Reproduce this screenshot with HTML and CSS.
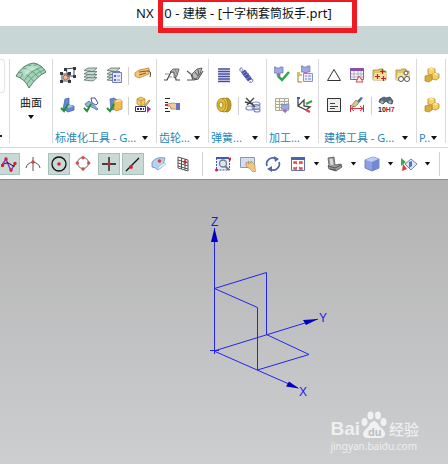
FILE: index.html
```html
<!DOCTYPE html>
<html lang="zh-CN">
<head>
<meta charset="utf-8">
<title>NX 10 - 建模</title>
<link rel="stylesheet" href="styles.css">
</head>
<body>
<svg class="defs" aria-hidden="true">
  <symbol id="check" viewBox="0 0 16 16"><path d="M1 11l3 3 4-7" fill="none" stroke="#27903a" stroke-width="2"/></symbol>
  <symbol id="stack" viewBox="0 0 16 16"><g fill="#c6d9d0" stroke="#5b7068" stroke-width=".8"><path d="M1 13l4-2.500h9l-4 3.500z"/><path d="M1 10l4-2.500h9l-4 3.500z"/><path d="M1 7l4-2.500h9l-4 3.500z"/><path d="M1 3.500l4-2.500h9l-4 3.500z"/></g></symbol>
  <symbol id="cubes" viewBox="0 0 16 16"><g stroke="#b98c24" stroke-width=".8"><path d="M4 2l3-1 4 1v4l-3 2-4-1z" fill="#f7d468"/><path d="M8 7l3-1 4 1v4l-3 2-4-1z" fill="#f8cf5c"/><path d="M1 9l3-1 4 1v4l-3 2-4-1z" fill="#d5ad3b"/></g><path d="M4 2l4 1 3-1-4-1zM8 7l4 1 3-1-4-1z" fill="#fff0b5"/></symbol>
  <symbol id="folder" viewBox="0 0 16 16"><path d="M1 3h5l1-1h4v2h3v9H1z" fill="#e2c565" stroke="#a58a3b" stroke-width=".8"/><path d="M3 6h12l-2 7H1z" fill="#f5dfa0"/></symbol>
  <symbol id="clamp" viewBox="0 0 16 16"><path d="M0 1h2v1h4V1h3v6H6v3H3V7H0z" fill="#9cabdc" stroke="#6877b5" stroke-width=".7"/><path d="M3 7h3v2l-1 3-2-3z" fill="#c25cc8"/></symbol>
</svg>

<header class="title">
  <h1 class="title-text">NX 10 - <span class="cjk">建模</span> - [<span class="cjk">十字柄套筒扳手</span>.prt]</h1>
  <span class="highlight"></span>
</header>
<div class="tabs"></div>

<main class="app">
<section class="ribbon" aria-label="功能区">
  <div class="edge"><span class="edge-box"></span><button class="caret" aria-label="更多"></button></div>
  <div class="surface">
    <button class="big">
      <svg class="big-icon" viewBox="0 0 32 27"><path d="M1 14Q8 2 19 1Q27 3 31 10Q22 14 14 26Q10 17 1 14z" fill="#a5d3b8" stroke="#4c8366"/><path d="M4 10Q14 12 19 20M8 6Q18 8 23 15M13 3Q22 5 27 12M5 16Q12 5 23 2M9 19Q16 8 27 5M12 22Q18 12 29 8" fill="none" stroke="#5b9677" stroke-width=".8"/><path d="M7 11Q13 4 18 3L23 6Q15 8 10 14z" fill="#e1f4e9" opacity=".6"/></svg>
      <span>曲面</span>
      <i class="tri"></i>
    </button>
  </div>

  <div class="group">
    <div class="row">
      <button class="tool" aria-label="部件族"><svg viewBox="0 0 16 16"><path d="M6 2l8-1v8H8zM2 7h7v7H2z" fill="none" stroke="#444853"/><g fill="#353944"><path d="M4 1h3v3H4zM13 0h3v3h-3zM13 8h3v3h-3zM0 5h3v3H0zM8 5h3v3H8zM0 13h3v3H0zM8 13h3v3H8z"/></g><circle cx="5.500" cy="10.500" r="2.500" fill="#f4b291" stroke="#df4d3b"/></svg></button>
      <button class="tool" aria-label="图层"><svg viewBox="0 0 16 16"><use href="#stack"/></svg></button>
      <button class="tool" aria-label="图层设置"><svg viewBox="0 0 16 16"><use href="#stack"/><path d="M6.500 5.500h9v10h-9z" fill="#e6e9ff" stroke="#727bbf"/><path d="M8 8h2v2H8zM8 12h2v2H8z" fill="#5961b8"/><path d="M11 9h3M11 13h3" stroke="#7780bc"/></svg></button>
      <i class="rule"></i>
      <button class="tool" aria-label="属性"><svg viewBox="0 0 16 16"><path d="M0 6l4-3 10-2v6L4 11 0 9z" fill="#f7c679" stroke="#bd7d31" stroke-width=".8"/><path d="M4 5l8-1M4 8l7-2" stroke="#7f5937"/><path d="M12 4q5-1 3 6" fill="none" stroke="#574649"/></svg></button>
    </div>
    <div class="row">
      <button class="tool" aria-label="检查模型"><svg viewBox="0 0 16 16"><path d="M5 2l4-1v7l5 1v4l-6 2-5-3z" fill="#6389d5" stroke="#3b5daa" stroke-width=".7"/><path d="M5 9l4-1 5 1-5 2z" fill="#a9c2f0"/><use href="#check"/></svg></button>
      <button class="tool" aria-label="检查工具"><svg viewBox="0 0 16 16"><path d="M8 1h4l3 5-2 2-4-2z" fill="#fff" stroke="#4752bb"/><path d="M2 7l4-3 9 8-1 1-7-4-3 1z" fill="#8ebad5" stroke="#4c6c91" stroke-width=".8"/><use href="#check"/></svg></button>
      <button class="tool" aria-label="检查装配"><svg viewBox="0 0 16 16"><path d="M4 2l4-1 3 2v9l-6 1z" fill="#638bd6" stroke="#3f5d9e" stroke-width=".7"/><path d="M8 4l6-2 2 2v8l-6 2-2-2z" fill="#efbd4f" stroke="#b18125" stroke-width=".7"/><path d="M8 4l6-2 2 2-5 1z" fill="#ffe29a"/><use href="#check"/></svg></button>
      <i class="rule"></i>
      <button class="tool" aria-label="零件编辑"><svg viewBox="0 0 16 16"><path d="M2 2l4-2 4 2v5L6 9 2 7z" fill="#f2cc65" stroke="#b88a29" stroke-width=".8"/><path d="M2 2l4 2 4-2M6 4v5" fill="none" stroke="#b88a29" stroke-width=".8"/><path d="M9 9l5-6 1 1-5 6z" fill="#dbc06a" stroke="#826632" stroke-width=".6"/><path d="M.5 9.500h10v5H.5z" fill="#fff" stroke="#3c3472"/><path d="M2 12h7" stroke="#382c68" stroke-width="2" stroke-dasharray="2 1"/><path d="M12 9l4 3-4 4z" fill="#a32ab2"/></svg></button>
    </div>
    <div class="label"><span>标准化工具 - G...</span><i class="tri"></i></div>
  </div>

  <div class="group">
    <div class="row">
      <button class="tool" aria-label="柱齿轮"><svg viewBox="0 0 16 16"><path d="M0 13h3l4-8h4l1 8h4" fill="none" stroke="#444" stroke-width="1.200"/><path d="M6 5l3-3h6l-2 7-3 2V5z" fill="#b5b8b8" stroke="#525656" stroke-width=".8"/><path d="M8 4l4 5M11 2l2 5M1 7h4M4 10h4" stroke="#777" stroke-width=".8"/></svg></button>
      <button class="tool" aria-label="锥齿轮"><svg viewBox="0 0 16 16"><path d="M0 4l4 3 2 6 5-1 5-8" fill="none" stroke="#555" stroke-width="1.200"/><path d="M5 7l5-5 5-1-2 6-4 5-3-1z" fill="#b7b9b9" stroke="#444" stroke-width=".8"/><path d="M8 5l3 4M11 3l1 5M0 13h5" stroke="#555"/></svg></button>
    </div>
    <div class="row">
      <button class="tool" aria-label="齿轮出图"><svg viewBox="0 0 16 16"><path d="M1 1.500h5M1 5.500h3M1 11.500h3M1 14.500h5" stroke="#222"/><path d="M3 7l7-1 3 1v5H7L6 9H3z" fill="#f1ca9c" stroke="#9c7458" stroke-width=".7"/><path d="M12 6h4v7h-4z" fill="#696fc3"/><path d="M1 7h3v2H1z" fill="#e32b31"/></svg></button>
    </div>
    <div class="label"><span>齿轮...</span><i class="tri"></i></div>
  </div>

  <div class="group">
    <div class="row">
      <button class="tool" aria-label="压缩弹簧"><svg viewBox="0 0 16 16"><path d="M3 2h10v12H3z" fill="#dfe1fa"/><path d="M2 2h12M2 4.500h12M2 7h12M2 9.500h12M2 12h12M2 14.500h12" stroke="#4b509c" stroke-width="1.300"/></svg></button>
      <button class="tool" aria-label="拉伸弹簧"><svg viewBox="0 0 16 16"><path d="M4 3Q2-1 1 2t3 2M11 12q4 0 3 2t-4 1" fill="none" stroke="#7474a0"/><path d="M4 4l7 9" stroke="#4a50a6" stroke-width="5"/><path d="M3 7l5-3M5 9l5-3M7 12l5-3" stroke="#8f98dc" stroke-width=".8"/></svg></button>
    </div>
    <div class="row">
      <button class="tool" aria-label="碟形弹簧"><svg viewBox="0 0 16 16"><g stroke="#957112" stroke-width=".8"><ellipse cx="11" cy="8" rx="4" ry="7" fill="#c39d27"/><ellipse cx="8" cy="8" rx="4" ry="7" fill="#eed15c"/><ellipse cx="5.500" cy="8" rx="4.500" ry="6.500" fill="#e2bd39"/><ellipse cx="5" cy="8" rx="2" ry="3" fill="#fff3b7"/></g></svg></button>
      <i class="rule"></i>
      <button class="tool" aria-label="删除弹簧"><svg viewBox="0 0 16 16"><g fill="none" stroke="#7d8bbd" stroke-width="1.200"><ellipse cx="11" cy="7" rx="4" ry="2"/><ellipse cx="11" cy="10" rx="4" ry="2.500"/><ellipse cx="12" cy="13" rx="3" ry="2"/><ellipse cx="5" cy="11" rx="4" ry="2"/></g><path d="M1 1l9 9M9 1L2 8M0 5l8 2" stroke="#444" stroke-width="1.400"/></svg></button>
    </div>
    <div class="label"><span>弹簧...</span><i class="tri"></i></div>
  </div>

  <div class="group">
    <div class="row">
      <button class="tool" aria-label="加工准备"><svg viewBox="0 0 16 16"><use href="#clamp" width="16" height="16" y="-1"/><path d="M4 9l4 4 7-8" fill="none" stroke="#29a947" stroke-width="2.500"/></svg></button>
      <button class="tool" aria-label="加工列表"><svg viewBox="0 0 16 16"><path d="M1 6v9h4M1 8h4" fill="none" stroke="#9d7b20"/><path d="M0 5h3v3H0z" fill="#dec04e"/><use href="#clamp" width="16" height="16" x="4" y="-2"/><path d="M6.500 6.500h9v8h-9z" fill="#e9ebfc" stroke="#8a93c5"/><path d="M8 9h2M11 9h3M8 12h2M11 12h3" stroke="#7b82b7"/></svg></button>
    </div>
    <div class="row">
      <button class="tool" aria-label="工件网格"><svg viewBox="0 0 16 16"><path d="M1.500 1.500h13v12h-13zM2 4.500h12M2 7.500h12M2 10.500h12M5.500 2v11M10.500 2v11" fill="#faf8e4" stroke="#a9a99c"/><use href="#clamp" width="14" height="14" x="7" y="6"/></svg></button>
      <button class="tool" aria-label="加工坐标"><svg viewBox="0 0 16 16"><path d="M1 1v8l8 4M1 9l6-6v6l6 1-4 3" fill="none" stroke="#444" stroke-width="1.300"/><path d="M0 1h3" stroke="#355bdb" stroke-width="2"/><path d="M9 7l6-3" stroke="#3ca04a" stroke-width="2"/><path d="M9 13l4 2" stroke="#d6444f" stroke-width="2"/></svg></button>
    </div>
    <div class="label"><span>加工...</span><i class="tri"></i></div>
  </div>

  <div class="group">
    <div class="row">
      <button class="tool" aria-label="基准"><svg viewBox="0 0 16 16"><path d="M8 2.500l6.500 11h-13z" fill="none" stroke="#333"/></svg></button>
      <button class="tool" aria-label="表格"><svg viewBox="0 0 16 16"><path d="M1.500 1.500h13v11h-13z" fill="#f5f4ff" stroke="#77728f"/><path d="M1 1h14v3H1z" fill="#8952a4"/><path d="M2 7h12M2 10h12M5 4v8M9 4v8M12 4v8" stroke="#b1aec8"/><path d="M10 9l4 6H7z" fill="#fff" stroke="#d24146"/></svg></button>
      <button class="tool" aria-label="点集文件"><svg viewBox="0 0 16 16"><use href="#folder"/><path d="M10.500 2v5M8 4.500h5M5.500 7v5M3 9.500h5M11.500 9v5M9 11.500h5" stroke="#ba2525" stroke-width="1.200"/></svg></button>
      <button class="tool" aria-label="孔文件"><svg viewBox="0 0 16 16"><use href="#folder"/><g fill="#fff" stroke="#555"><circle cx="11" cy="6" r="2"/><circle cx="6" cy="12" r="2.500"/><circle cx="12" cy="12" r="2.500"/></g></svg></button>
    </div>
    <div class="row">
      <button class="tool" aria-label="注释"><svg viewBox="0 0 16 16"><path d="M1.500 1.500h13v13h-13z" fill="#eee" stroke="#333"/><path d="M4 6.500h5M4 9.500h8M4 11.500h5" stroke="#444"/></svg></button>
      <button class="tool" aria-label="尺寸清理"><svg viewBox="0 0 16 16"><path d="M12 0l2 1-4 5-2-2z" fill="#4f6fab"/><path d="M7 3l3 3-4 4-4-1z" fill="#d5c586" stroke="#858464" stroke-width=".7"/><path d="M1.500 8v7M14.500 8v7M2 11.500h12M5 9l-3 2.500 3 2.500M11 9l3 2.500-3 2.500" fill="none" stroke="#ce3342"/></svg></button>
      <i class="rule"></i>
      <button class="tool" aria-label="公差查询"><svg viewBox="0 0 16 16"><path d="M2 2l4-2 2 1 4-1 3 4-1 3-4-1-2-2-3 3-4-2z" fill="#596b7f" stroke="#333e4c" stroke-width=".7"/><circle cx="4" cy="5" r="1.500" fill="#a3b4bf"/><circle cx="12" cy="5" r="1.500" fill="#a3b4bf"/><text x="0" y="15" class="fit-text">10<tspan class="fit-code">H7</tspan></text></svg></button>
    </div>
    <div class="label wide"><span>建模工具 - G...</span><i class="tri"></i></div>
  </div>

  <div class="group">
    <div class="row"><button class="tool" aria-label="部件"><svg viewBox="0 0 16 16"><use href="#cubes"/></svg></button></div>
    <div class="row"><button class="tool" aria-label="部件组"><svg viewBox="0 0 16 16"><use href="#cubes"/></svg></button></div>
    <div class="label"><span>P..</span><i class="tri"></i></div>
  </div>
  <div class="group last"></div>
</section>

<nav class="toolbar" aria-label="选择工具条">
  <div class="pair">
    <button class="snap on" aria-label="控制点"><svg viewBox="0 0 16 16"><path d="M1 9l4-6 5 12 4-8" fill="none" stroke="#9333cc" stroke-width="1.500"/><path d="M1 10q4-5 8-2t5 2" fill="none" stroke="#111"/><g fill="#d8202b"><circle cx="1.500" cy="9.500" r="1.700"/><circle cx="5" cy="3" r="1.700"/><circle cx="10" cy="14" r="1.700"/><circle cx="14" cy="7.500" r="1.700"/></g></svg></button>
    <button class="snap" aria-label="交点"><svg viewBox="0 0 16 16"><path d="M8 1v14M1 12q1-5 7-6 6 1 7 6" fill="none" stroke="#555"/><circle cx="8" cy="6" r="1.700" fill="#dc3d40"/></svg></button>
  </div>
  <div class="pair">
    <button class="snap on" aria-label="圆心"><svg viewBox="0 0 16 16"><circle cx="8" cy="8" r="7" fill="none" stroke="#111" stroke-width="1.300"/><circle cx="8" cy="8" r="1.800" fill="#d8202b"/></svg></button>
    <button class="snap" aria-label="象限点"><svg viewBox="0 0 16 16"><circle cx="8" cy="7" r="5.500" fill="none" stroke="#666"/><g fill="#dc4b4b"><circle cx="8" cy="1.700" r="1.700"/><circle cx="8" cy="13" r="1.700"/><circle cx="2.300" cy="7" r="1.700"/><circle cx="13.700" cy="7" r="1.700"/></g></svg></button>
  </div>
  <div class="pair">
    <button class="snap on" aria-label="现有点"><svg viewBox="0 0 16 16"><path d="M8 1v14M1 8h14" stroke="#111" stroke-width="1.300"/><circle cx="8" cy="8" r="1.700" fill="#d8202b"/></svg></button>
    <button class="snap on" aria-label="曲线上的点"><svg viewBox="0 0 16 16"><path d="M1 15L14 2" stroke="#111" stroke-width="1.300"/><circle cx="6" cy="11" r="1.900" fill="#d8202b"/></svg></button>
  </div>
  <div class="pair">
    <button class="snap" aria-label="面上的点"><svg viewBox="0 0 16 16"><path d="M1 6q5-6 13-4-1 3-2 8l-5 4q-3-3-6-3z" fill="#b5d1ee" stroke="#668dba" stroke-width=".8"/><path d="M7 14q0-5 7-7l1 2-3 1z" fill="#e9f4fc" stroke="#9eb2c4" stroke-width=".5"/><circle cx="8.500" cy="5" r="1.800" fill="#d64249"/></svg></button>
    <button class="snap" aria-label="网格点"><svg viewBox="0 0 16 16"><path d="M3 1l10 3v11L3 12zM6.500 2v11M10 3v11M3 4l10 3M3 7l10 3M3 10l10 3" fill="none" stroke="#444" stroke-width=".9"/><circle cx="10" cy="6" r="1.700" fill="#d8202b"/></svg></button>
  </div>
  <i class="bar"></i>
  <div class="views">
    <button class="snap" aria-label="缩放窗口"><svg viewBox="0 0 16 16"><path d="M1.500 2v12h13V2" fill="#e8edff" stroke="#3f55bd" stroke-dasharray="2 1"/><path d="M1 1h13v2H1z" fill="#405baf"/><circle cx="8" cy="7.500" r="3.500" fill="#d7eaf3" stroke="#6f7e84" stroke-width="1.300"/><path d="M10 10l4 4" stroke="#777" stroke-width="2"/><circle cx="15" cy="3" r="1.500" fill="#d8202b"/><circle cx="1.500" cy="14" r="1.500" fill="#d8202b"/></svg></button>
    <button class="snap" aria-label="平移"><svg viewBox="0 0 16 16"><path d="M.5 1.500h14v10H.5z" fill="#d6deec" stroke="#8799b8"/><path d="M6 6l3 2-1-3 3 2V5l2 2 2 2v4l2 2-4 1-3-3-4-3z" fill="#edc983" stroke="#a98045" stroke-width=".6"/></svg></button>
    <button class="snap" aria-label="旋转"><svg viewBox="0 0 16 16"><path d="M2 10A6 6 0 0 1 11 3M14 6A6 6 0 0 1 5 13" fill="none" stroke="#5368a1" stroke-width="1.700"/><path d="M9 0l5 3-4 3zM7 10l-5 3 5 3z" fill="#5368a1"/></svg></button>
    <button class="snap" aria-label="适合窗口"><svg viewBox="0 0 16 16"><path d="M1.500 1.500h13v13h-13z" fill="#fff" stroke="#5871b8"/><path d="M1 1h14v3H1z" fill="#4765ac"/><path d="M4 6l3 2M12 6L9 8M4 13l3-2M12 13l-3-2M4 8V6h3M12 8V6H9M4 11v2h3M12 11v2H9" fill="none" stroke="#e64c3c" stroke-width="1.300"/></svg></button>
    <button class="drop" aria-label="视图选项"><i class="tri"></i></button>
    <button class="snap" aria-label="定向视图"><svg viewBox="0 0 16 16"><path d="M1 2l6-1 1 8 6-1 1 3-6 4-7-2-1-3 1-1z" fill="#999" stroke="#555" stroke-width=".8"/><path d="M2.500 3l3-.5 1 6-3 1z" fill="#d6d6d6"/><path d="M1 10l7 2 6-3M3 13l6 1" fill="none" stroke="#555"/></svg></button>
    <button class="drop" aria-label="定向选项"><i class="tri"></i></button>
    <button class="snap" aria-label="着色"><svg viewBox="0 0 16 16"><path d="M1 4l8-3 6 2v9l-7 3-7-3z" fill="#8ba0e5" stroke="#5c71bb" stroke-width=".8"/><path d="M1 4l8-3 6 2-7 3z" fill="#bdcbf7"/><path d="M8 6v9l7-3V3z" fill="#7188d5"/></svg></button>
    <button class="drop" aria-label="着色选项"><i class="tri"></i></button>
    <button class="snap" aria-label="显示和隐藏"><svg viewBox="0 0 16 16"><path d="M0 2l5 4-5 4z" fill="#3ea848"/><path d="M1 15l1-7 4 5z" fill="#d93b3b"/><path d="M4 8l6-5 6 5-6 6z" fill="#dce5f4" stroke="#7787a8"/><path d="M8 6l3-1v5l-3 2z" fill="#5874b3"/></svg></button>
    <button class="drop" aria-label="显示选项"><i class="tri"></i></button>
  </div>
  <i class="bar end"></i>
</nav>

<section class="canvas" aria-label="图形窗口">
  <svg class="axes" viewBox="0 0 448 284">
    <g fill="none" stroke="#2424ee">
      <path d="M214.500 48v126M210 170.500h9M214 171L318 139M214 171L298 208"/>
      <path d="M214.500 108.500L266.500 92.500V154.500L309 174.500L257.500 190V127.500z"/>
    </g>
    <g fill="#0000c4"><path d="M214.500 48l3.500 14h-7z"/><path d="M318 139l-12 6-3-5z"/><path d="M299 208.500l-13-2 3-5z"/></g>
    <g class="axis-name"><text x="211" y="46">Z</text><text x="319" y="142">Y</text><text x="299" y="216">X</text></g>
  </svg>
  <div class="brand">
    <div class="brand-top">
      <span class="bai">Bai</span>
      <span class="paw"><svg viewBox="0 0 26 28"><g fill="#f0f1f2"><ellipse cx="3.500" cy="11" rx="3" ry="4"/><ellipse cx="9.500" cy="4.500" rx="3" ry="4"/><ellipse cx="17" cy="4.500" rx="3" ry="4"/><ellipse cx="22.500" cy="11" rx="3" ry="4"/><path d="M13 10q3 0 6 6 6 4 5 8-1 3-5 3h-12q-5 0-5-4 0-3 5-7 3-6 6-6z"/></g><text x="7" y="25" class="du">du</text></svg></span>
      <span class="jy">经验</span>
    </div>
    <div class="site">jingyan.baidu.com</div>
  </div>
</section>
</main>
</body>
</html>
```
FILE: styles.css
```css
* { box-sizing: border-box; }
html, body { height: 100%; }
body {
  margin: 0;
  display: flex;
  flex-direction: column;
  background: #fff;
  color: #111;
  font-family: "Noto Sans", "Noto Sans CJK SC", sans-serif;
  font-size: 11px;
  overflow: hidden;
}
button { padding: 0; border: 0; background: none; font: inherit; color: inherit; }
svg { display: block; }
.defs { position: absolute; width: 0; height: 0; }

.title { position: relative; flex: none; height: 26px; padding-left: 136px; }
.title-text { margin: 0; font-size: 13px; font-weight: 400; line-height: 26px; white-space: nowrap; }
.cjk { font-size: 12px; }
.highlight {
  position: absolute;
  z-index: 1;
  left: 158px;
  top: -3px;
  width: 199px;
  height: 36px;
  border: 5px solid #ed1c24;
}
.tabs { flex: none; height: 28px; background: #c8d7d5; }
.app { flex: 1; min-height: 0; display: flex; flex-direction: column; }

.ribbon {
  flex: none;
  display: flex;
  height: 94px;
  padding-top: 5px;
  padding-bottom: 4px;
  border-bottom: 1px solid #dadada;
}
.edge { width: 9px; display: flex; flex-direction: column; justify-content: space-between; overflow: hidden; }
.edge-box { width: 5px; height: 34px; border: 1px solid #e4e4e4; border-left: 0; border-radius: 0 4px 4px 0; }
.caret { width: 2px; height: 2px; margin-bottom: 6px; background: #222; }
.surface { width: 43px; border-left: 1px solid #dadada; }
.big { width: 100%; display: flex; flex-direction: column; align-items: center; padding-top: 3px; }
.big-icon { width: 32px; height: 27px; margin-bottom: 6px; }
.big span { line-height: 16px; }
.big .tri { margin-top: 4px; }
.tri { flex: none; width: 6px; height: 4px; background: #111; clip-path: polygon(0 0, 100% 0, 50% 100%); }

.group {
  display: flex;
  flex-direction: column;
  gap: 14px;
  padding: 8px 5px 0 7px;
  border-left: 1px solid #dadada;
}
.row { display: flex; gap: 7px; height: 16px; }
.tool { width: 16px; height: 16px; }
.tool svg { width: 16px; height: 16px; overflow: visible; }
.rule { width: 1px; height: 18px; margin: 0 -1px; background: #cfcfcf; }
.label {
  width: 0;
  min-width: 100%;
  height: 14px;
  margin-top: 4px;
  display: flex;
  align-items: center;
  justify-content: space-between;
  line-height: 14px;
  white-space: nowrap;
  color: #2486b9;
}
.label span { flex: 1; min-width: 0; margin-left: -5px; }
.label .tri { margin-right: 3px; }
.label.wide span { margin-left: -2px; }
.last { padding: 0; }
.fit-text { font: bold 7px "Liberation Sans", sans-serif; fill: #222; }
.fit-code { fill: #c22330; }

.toolbar { flex: none; display: flex; align-items: center; height: 32px; border-bottom: 1px solid #8c8c8c; }
.pair { display: flex; gap: 2px; margin-right: 4px; }
.pair:first-child { margin-left: -2px; }
.snap { width: 22px; height: 22px; display: grid; place-items: center; border: 1px solid transparent; }
.snap svg { width: 16px; height: 16px; }
.on { background: #c8d9d6; border-color: #a7c1bc; }
.bar { width: 1px; height: 24px; background: #d2d2d2; margin: 0 9px 0 4px; }
.views { display: flex; gap: 3px; }
.drop { width: 9px; display: grid; place-items: center; }
.end { margin: 0 0 0 7px; }

.canvas { position: relative; flex: 1; min-height: 0; background: linear-gradient(#b2b2b2, #cdced0); }
.axes { width: 100%; }
.axis-name { font: 12px "Liberation Sans", sans-serif; fill: #1c1ce8; }
.brand { position: absolute; right: 29px; bottom: 11px; color: #eeeff0; }
.brand-top { display: flex; align-items: flex-end; height: 29px; }
.bai { font: bold 19px/20px "Liberation Sans", sans-serif; }
.paw { width: 26px; margin-left: 1px; }
.du { font: bold 11px "Liberation Sans", sans-serif; fill: #b9bbbd; }
.jy { margin-left: 2px; font-size: 15px; font-weight: 500; line-height: 20px; }
.site { font: 10px/14px "Noto Sans", sans-serif; }
```
